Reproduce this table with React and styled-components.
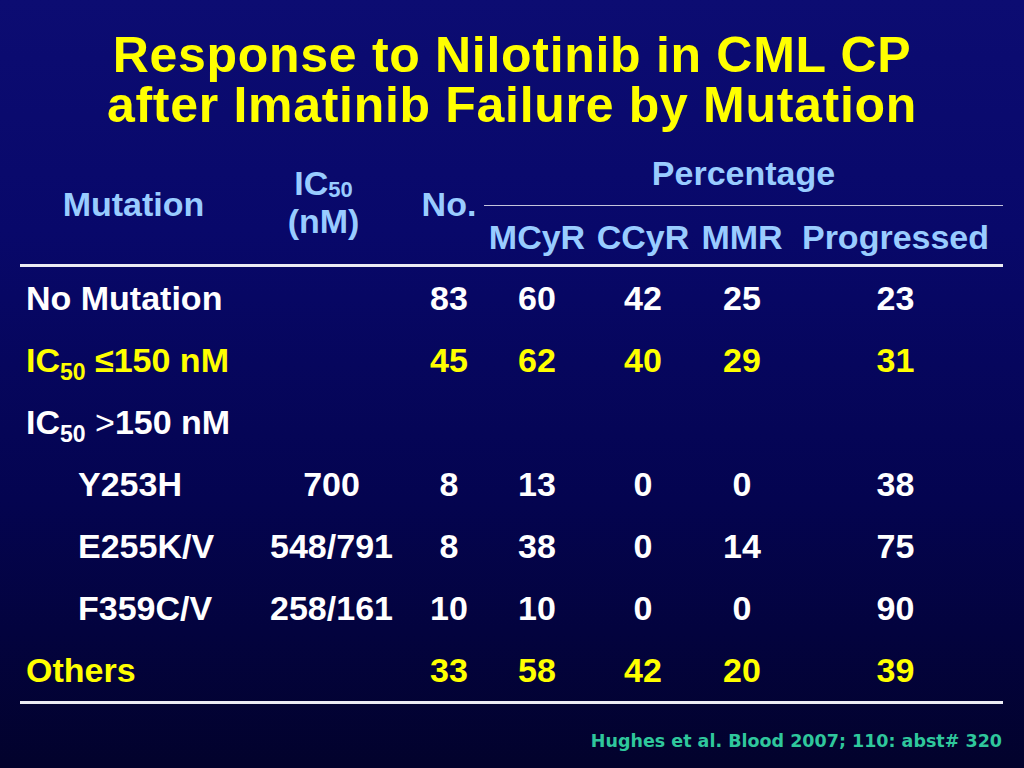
import React from 'react';
import styled, { createGlobalStyle } from 'styled-components';

const GlobalStyle = createGlobalStyle`
  html, body {
    margin: 0;
    padding: 0;
    background: #020230;
  }
`;

const cols = '243px 137px 84px 106px 106px 92px 215px';

const Slide = styled.div`
  width: 1024px;
  height: 768px;
  display: flex;
  flex-direction: column;
  background: linear-gradient(180deg, #0c0c72 0%, #08086a 30%, #040450 65%, #02022c 100%);
  font-family: 'Liberation Sans', Arial, sans-serif;
  font-weight: bold;
  overflow: hidden;
`;

const Title = styled.h1`
  margin: 0;
  padding-top: 30px;
  font-family: 'Liberation Sans', Arial, sans-serif;
  font-size: 50px;
  line-height: 50px;
  letter-spacing: 0.7px;
  font-weight: bold;
  color: #ffff00;
  text-align: center;
  white-space: nowrap;
`;

const Table = styled.div`
  margin: 14px 21px 0 20px;
  display: flex;
  flex-direction: column;
  font-size: 34px;
`;

const Header = styled.div`
  display: grid;
  grid-template-columns: ${cols};
  grid-template-rows: 62px 58px;
  border-bottom: 3px solid #ececf4;
  color: #99ccff;
`;

const HeadCell = styled.div`
  grid-column: ${(p) => p.$col};
  grid-row: 1 / 3;
  display: flex;
  flex-direction: column;
  align-items: center;
  justify-content: center;
  line-height: 38px;
  padding: ${(p) => p.$pad || '0'};
`;

const Percentage = styled.div`
  grid-column: 4 / 8;
  grid-row: 1;
  display: flex;
  align-items: center;
  justify-content: center;
  border-bottom: 1px solid #c4c4dc;
  padding-bottom: 2px;
`;

const SubHead = styled.div`
  grid-row: 2;
  grid-column: ${(p) => p.$col};
  display: flex;
  align-items: center;
  justify-content: center;
  padding-top: 5px;
`;

const Row = styled.div`
  display: grid;
  grid-template-columns: ${cols};
  height: 62px;
  align-items: center;
  color: ${(p) => (p.$tone === 'yellow' ? '#ffff00' : '#ffffff')};
  border-bottom: ${(p) => (p.$last ? '3px solid #ececf4' : 'none')};
`;

const Label = styled.div`
  padding-left: ${(p) => (p.$indent ? '58px' : '6px')};
  white-space: nowrap;
`;

const Value = styled.div`
  text-align: center;
  padding-left: ${(p) => p.$shift || '0'};
  white-space: nowrap;
`;

const Sub = styled.span`
  font-size: ${(p) => (p.$small ? '22px' : '23px')};
  vertical-align: ${(p) => p.$drop || '-8px'};
  line-height: 0;
`;

const Thin = styled.span`
  font-weight: normal;
`;

const Cite = styled.div`
  margin-top: 27px;
  padding-right: 22px;
  text-align: right;
  font-family: 'DejaVu Sans', Verdana, sans-serif;
  font-weight: bold;
  font-size: 17.5px;
  color: #2fc79c;
`;

const rows = [
  { label: 'No Mutation', values: ['', '83', '60', '42', '25', '23'] },
  { label: 'ic50-le', tone: 'yellow', values: ['', '45', '62', '40', '29', '31'] },
  { label: 'ic50-gt', values: ['', '', '', '', '', ''] },
  { label: 'Y253H', indent: true, values: ['700', '8', '13', '0', '0', '38'] },
  { label: 'E255K/V', indent: true, values: ['548/791', '8', '38', '0', '14', '75'] },
  { label: 'F359C/V', indent: true, values: ['258/161', '10', '10', '0', '0', '90'] },
  { label: 'Others', tone: 'yellow', values: ['', '33', '58', '42', '20', '39'] },
];

const renderLabel = (label) => {
  if (label === 'ic50-le') {
    return (
      <>
        IC<Sub>50</Sub> ≤150 nM
      </>
    );
  }
  if (label === 'ic50-gt') {
    return (
      <>
        IC<Sub>50</Sub> <Thin>&gt;</Thin>150 nM
      </>
    );
  }
  return label;
};

export default function App() {
  return (
    <Slide>
      <GlobalStyle />
      <Title>
        Response to Nilotinib in CML CP
        <br />
        after Imatinib Failure by Mutation
      </Title>
      <Table>
        <Header>
          <HeadCell $col="1" $pad="0 16px 0 0">Mutation</HeadCell>
          <HeadCell $col="2" $pad="0 16px 4px 0">
            <span>
              IC<Sub $small $drop="-2px">50</Sub>
            </span>
            <span>(nM)</span>
          </HeadCell>
          <HeadCell $col="3" $pad="0 0 0 14px">No.</HeadCell>
          <Percentage>Percentage</Percentage>
          <SubHead $col="4">MCyR</SubHead>
          <SubHead $col="5">CCyR</SubHead>
          <SubHead $col="6">MMR</SubHead>
          <SubHead $col="7">Progressed</SubHead>
        </Header>
        {rows.map((r, i) => (
          <Row key={r.label} $tone={r.tone} $last={i === rows.length - 1}>
            <Label $indent={r.indent}>{renderLabel(r.label)}</Label>
            {r.values.map((v, j) => (
              <Value key={j} $shift={j === 1 ? '14px' : '0'}>
                {v}
              </Value>
            ))}
          </Row>
        ))}
      </Table>
      <Cite>Hughes et al. Blood 2007; 110: abst# 320</Cite>
    </Slide>
  );
}
